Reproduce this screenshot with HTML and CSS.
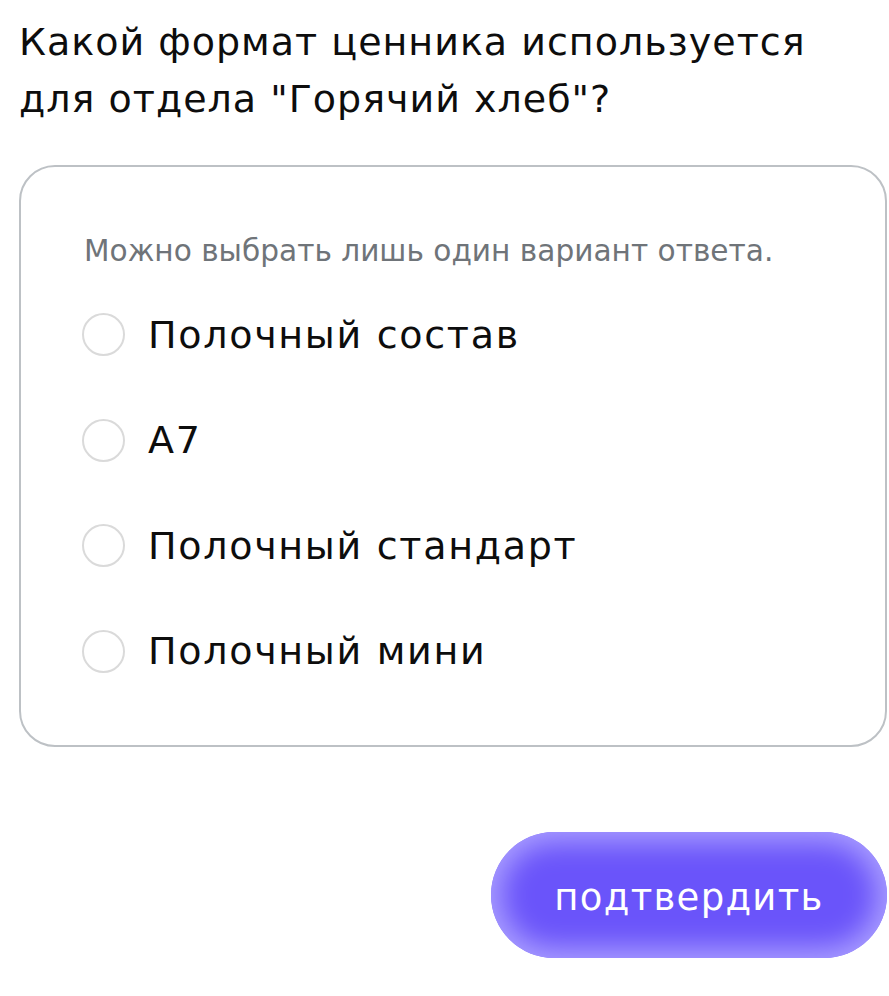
FILE: index.html
```html
<!DOCTYPE html>
<html lang="ru">
<head>
<meta charset="utf-8">
<link rel="stylesheet" href="styles.css">
</head>
<body>
<main class="page">
  <h1 class="question">Какой формат ценника используется для отдела "Горячий хлеб"?</h1>
  <section class="card">
    <p class="hint">Можно выбрать лишь один вариант ответа.</p>
    <ul class="options">
      <li class="option"><span class="radio"></span><span class="label">Полочный состав</span></li>
      <li class="option"><span class="radio"></span><span class="label">А7</span></li>
      <li class="option"><span class="radio"></span><span class="label">Полочный стандарт</span></li>
      <li class="option"><span class="radio"></span><span class="label">Полочный мини</span></li>
    </ul>
  </section>
  <div class="actions">
    <button class="submit">подтвердить</button>
  </div>
</main>
</body>
</html>
```

FILE: styles.css
```css
* { box-sizing: border-box; }
html, body { margin: 0; padding: 0; background: #ffffff; }
body {
  font-family: "DejaVu Sans", "Noto Sans", sans-serif;
  color: #111111;
  width: 889px;
  height: 996px;
  overflow: hidden;
}
.page {
  padding: 14px 2px 0 19px;
  display: flex;
  flex-direction: column;
}
.question {
  margin: 0;
  font-size: 38px;
  font-weight: 400;
  line-height: 57px;
  letter-spacing: 1px;
  color: #0d0d0d;
  padding-right: 40px;
}
.card {
  margin-top: 37px;
  border: 2px solid #bdc1c5;
  border-radius: 36px;
  padding: 64px 20px 36px 61px;
  height: 582px;
}
.hint {
  margin: 0;
  padding-left: 2px;
  font-size: 29.6px;
  line-height: 40px;
  color: #6f7479;
}
.options {
  list-style: none;
  margin: 11px 0 0;
  padding: 0;
  display: flex;
  flex-direction: column;
}
.option {
  display: flex;
  align-items: center;
  height: 105.5px;
  gap: 23px;
}
.radio {
  width: 43px;
  height: 43px;
  border-radius: 50%;
  border: 2px solid #dadada;
  flex: none;
}
.label {
  font-size: 38px;
  letter-spacing: 1.7px;
  color: #0d0d0d;
}
.actions {
  display: flex;
  justify-content: flex-end;
  margin-top: 85px;
}
.submit {
  width: 396px;
  height: 126px;
  border: none;
  border-radius: 63px;
  background: #6a54fa;
  box-shadow: inset 0 0 28px 10px #ab9fff;
  color: #ffffff;
  font-family: "DejaVu Sans", "Noto Sans", sans-serif;
  font-size: 37px;
  letter-spacing: 1.3px;
  font-weight: 400;
  padding: 4px 0 0;
}
```
